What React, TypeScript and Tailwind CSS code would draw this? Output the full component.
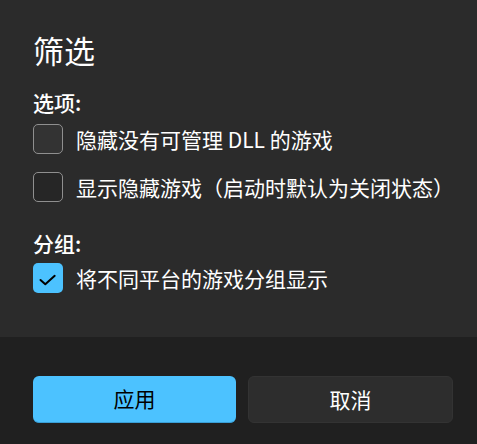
export default function App() {
  const options = [
    { label: '隐藏没有可管理 DLL 的游戏', checked: false, hover: true },
    { label: '显示隐藏游戏（启动时默认为关闭状态）', checked: false, hover: false },
  ]

  return (
    <div
      className="w-[477px] h-[444px] flex flex-col text-white overflow-hidden"
      style={{ fontFamily: '"Segoe UI", "Noto Sans CJK SC", "Noto Sans", sans-serif' }}
    >
      <div className="flex-1 bg-[#2b2b2b] pl-[33px] pr-6 pt-[30px]">
        <h1 className="text-[31px] leading-[40px] font-normal">筛选</h1>

        <div className="mt-[18px] text-[21px] leading-[28px] font-medium">选项:</div>
        <div className="mt-2 flex flex-col gap-[18px]">
          {options.map((o) => (
            <CheckRow key={o.label} label={o.label} checked={o.checked} hover={o.hover} />
          ))}
        </div>

        <div className="mt-[27px] text-[21px] leading-[28px] font-medium">分组:</div>
        <div className="mt-[6px]">
          <CheckRow label="将不同平台的游戏分组显示" checked />
        </div>
      </div>

      <div className="h-[107px] bg-[#202020] pl-[33px] pr-6 pt-[39px] flex gap-3">
        <button className="flex-1 h-[47px] rounded-md bg-[#4cc2ff] border-b border-[#3a9fd6] text-[21px] text-black">
          应用
        </button>
        <button className="flex-1 h-[47px] rounded-md bg-[#2d2d2d] border border-[#333333] text-[21px] text-white">
          取消
        </button>
      </div>
    </div>
  )
}

function CheckRow({ label, checked, hover }: { label: string; checked?: boolean; hover?: boolean }) {
  return (
    <div className="flex items-center gap-[13px] h-[30px]">
      {checked ? (
        <div className="w-[30px] h-[30px] rounded-[5px] bg-[#4cc2ff] flex items-center justify-center">
          <svg width="30" height="30" viewBox="0 0 30 30" fill="none">
            <path d="M7.5 17 L12.3 21.3 L21.7 12.8" stroke="#000" strokeWidth="2" strokeLinecap="round" strokeLinejoin="round" />
          </svg>
        </div>
      ) : (
        <div
          className={
            'w-[30px] h-[30px] rounded-[5px] border-[1.5px] border-[#8f8f8f] ' +
            (hover ? 'bg-[#333333]' : 'bg-[#262626]')
          }
        />
      )}
      <span className="text-[21px] leading-[28px]">{label}</span>
    </div>
  )
}
